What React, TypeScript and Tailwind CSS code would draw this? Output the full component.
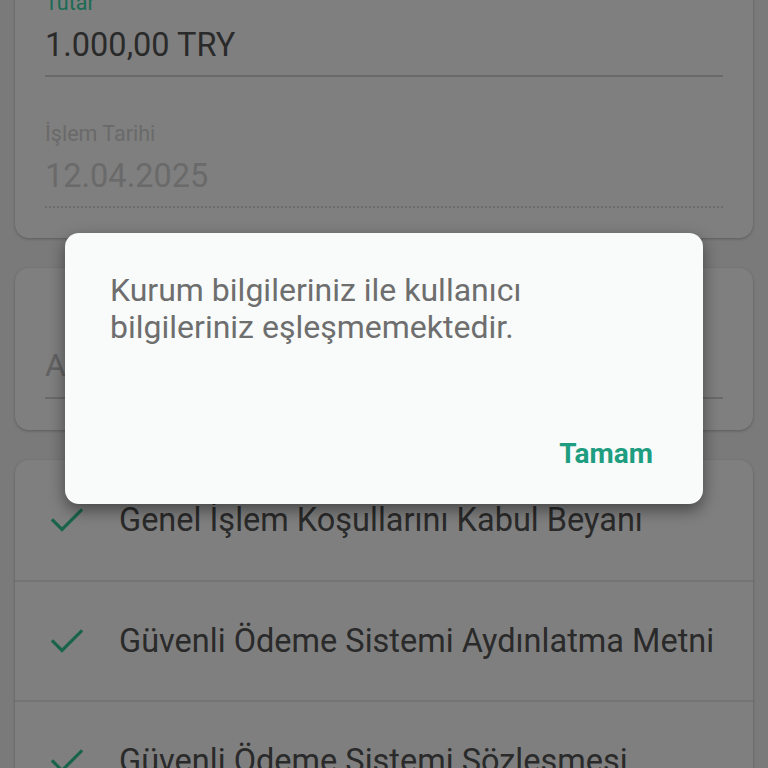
import React from "react";

function Check() {
  return (
    <svg width="32" height="26" viewBox="0 0 32 26" fill="none" className="shrink-0">
      <path d="M2 13.5 L11 22.5 L30 3.5" stroke="#36c898" strokeWidth="3.2" strokeLinecap="square" />
    </svg>
  );
}

function Field({
  label,
  value,
  disabled,
  dotted,
}: {
  label: string;
  value: string;
  disabled?: boolean;
  dotted?: boolean;
}) {
  return (
    <div className="flex flex-col">
      <div
        className={
          "text-[21.5px] leading-[28px] " + (disabled ? "text-[#d4d4d4]" : "text-[#38d6a8]")
        }
      >
        {label}
      </div>
      <div
        className={
          "mt-[8px] text-[32.5px] leading-[40px] " + (disabled ? "text-[#d4d4d4]" : "text-[#545454]")
        }
      >
        {value}
      </div>
      {dotted ? (
        <div className="mt-[10px] h-[2px] border-b-2 border-dotted border-[#d8d8d8]" />
      ) : (
        <div className="mt-[10px] h-[2px] bg-[#d4d4d4]" />
      )}
    </div>
  );
}

const rows = [
  "Genel İşlem Koşullarını Kabul Beyanı",
  "Güvenli Ödeme Sistemi Aydınlatma Metni",
  "Güvenli Ödeme Sistemi Sözleşmesi",
];

export default function App() {
  return (
    <div
      className="relative h-[768px] w-[768px] overflow-hidden bg-[#f4f4f4]"
      style={{ fontFamily: "Roboto, 'Noto Sans', sans-serif" }}
    >
      <div className="mt-[-42px] flex flex-col gap-[30px] px-[15px]">
        <div className="rounded-[14px] bg-white px-[30px] pb-[30px] pt-[31px] shadow-[0_1px_3px_rgba(0,0,0,0.25)]">
          <Field label="Tutar" value="1.000,00 TRY" />
          <div className="h-[43px]" />
          <Field label="İşlem Tarihi" value="12.04.2025" disabled dotted />
        </div>

        <div className="rounded-[14px] bg-white px-[30px] pb-[31px] pt-[75px] shadow-[0_1px_3px_rgba(0,0,0,0.25)]">
          <div className="text-[32px] leading-[44px] text-[#c4c4c4]">Açıklama</div>
          <div className="mt-[10px] h-[2px] bg-[#d4d4d4]" />
        </div>

        <div className="rounded-[14px] bg-white shadow-[0_1px_3px_rgba(0,0,0,0.25)]">
          {rows.map((r, i) => (
            <div
              key={r}
              className={
                "flex h-[120px] items-center gap-[36px] pl-[36px] pr-[20px] " +
                (i > 0 ? "border-t-2 border-[#e8e8e8]" : "")
              }
            >
              <Check />
              <span className="text-[32.5px] text-[#545454]">{r}</span>
            </div>
          ))}
        </div>
      </div>

      <div className="absolute inset-0 bg-black/50" />

      <div className="absolute left-[65px] top-[233px] flex h-[271px] w-[638px] flex-col rounded-[14px] bg-[#f8fbfa] px-[45px] pt-[39px] shadow-[0_6px_16px_rgba(0,0,0,0.45)]">
        <p className="text-[32px] leading-[37px] text-[#6e6e6e]">
          Kurum bilgileriniz ile kullanıcı
          <br />
          bilgileriniz eşleşmemektedir.
        </p>
        <div className="mt-auto flex justify-end pb-[30px] pr-[5px]">
          <button className="text-[28px] font-bold leading-[40px] text-[#1f9d80]">Tamam</button>
        </div>
      </div>
    </div>
  );
}
